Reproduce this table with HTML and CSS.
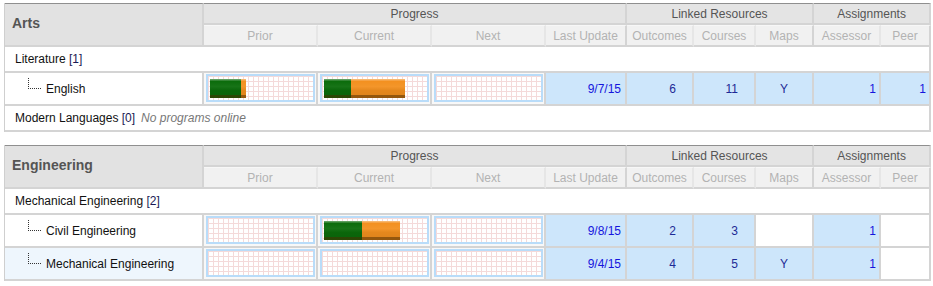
FILE: index.html
```html
<!DOCTYPE html>
<html lang="en">
<head>
<meta charset="utf-8">
<title>Program Status</title>
<link rel="stylesheet" href="styles.css">
</head>
<body>

<table class="grid">
  <colgroup>
    <col class="c-name"><col class="c-bar"><col class="c-bar"><col class="c-bar">
    <col class="c-date"><col class="c-out"><col class="c-crs"><col class="c-map">
    <col class="c-ass"><col class="c-peer">
  </colgroup>
  <thead>
    <tr class="hd1">
      <th rowspan="2" class="area">Arts</th>
      <th colspan="4">Progress</th>
      <th colspan="3">Linked Resources</th>
      <th colspan="2">Assignments</th>
    </tr>
    <tr class="hd2">
      <th class="minor">Prior</th><th class="minor">Current</th><th class="minor">Next</th><th>Last Update</th>
      <th class="minor">Outcomes</th><th class="minor">Courses</th><th>Maps</th>
      <th class="minor">Assessor</th><th>Peer</th>
    </tr>
  </thead>
  <tbody>
    <tr class="group"><td colspan="10">Literature <span class="count">[1]</span></td></tr>
    <tr class="program">
      <td class="name"><span class="branch"></span>English</td>
      <td class="bar-cell"><div class="track"><div class="bar"><span class="done" style="width:31px"></span><span class="work" style="width:5px"></span></div></div></td>
      <td class="bar-cell"><div class="track"><div class="bar"><span class="done" style="width:27px"></span><span class="work" style="width:54px"></span></div></div></td>
      <td class="bar-cell"><div class="track"></div></td>
      <td class="val date">9/7/15</td>
      <td class="val num">6</td>
      <td class="val num">11</td>
      <td class="val flag">Y</td>
      <td class="val asg">1</td>
      <td class="val asg">1</td>
    </tr>
    <tr class="group"><td colspan="10">Modern Languages <span class="count">[0]</span><span class="note">No programs online</span></td></tr>
  </tbody>
</table>

<table class="grid">
  <colgroup>
    <col class="c-name"><col class="c-bar"><col class="c-bar"><col class="c-bar">
    <col class="c-date"><col class="c-out"><col class="c-crs"><col class="c-map">
    <col class="c-ass"><col class="c-peer">
  </colgroup>
  <thead>
    <tr class="hd1">
      <th rowspan="2" class="area">Engineering</th>
      <th colspan="4">Progress</th>
      <th colspan="3">Linked Resources</th>
      <th colspan="2">Assignments</th>
    </tr>
    <tr class="hd2">
      <th class="minor">Prior</th><th class="minor">Current</th><th class="minor">Next</th><th>Last Update</th>
      <th class="minor">Outcomes</th><th class="minor">Courses</th><th>Maps</th>
      <th class="minor">Assessor</th><th>Peer</th>
    </tr>
  </thead>
  <tbody>
    <tr class="group"><td colspan="10">Mechanical Engineering <span class="count">[2]</span></td></tr>
    <tr class="program">
      <td class="name"><span class="branch"></span>Civil Engineering</td>
      <td class="bar-cell"><div class="track"></div></td>
      <td class="bar-cell"><div class="track"><div class="bar"><span class="done" style="width:38px"></span><span class="work" style="width:38px"></span></div></div></td>
      <td class="bar-cell"><div class="track"></div></td>
      <td class="val date">9/8/15</td>
      <td class="val num">2</td>
      <td class="val num">3</td>
      <td class="empty"></td>
      <td class="val asg">1</td>
      <td class="empty"></td>
    </tr>
    <tr class="program alt">
      <td class="name"><span class="branch"></span>Mechanical Engineering</td>
      <td class="bar-cell"><div class="track"></div></td>
      <td class="bar-cell"><div class="track"></div></td>
      <td class="bar-cell"><div class="track"></div></td>
      <td class="val date">9/4/15</td>
      <td class="val num">4</td>
      <td class="val num">5</td>
      <td class="val flag">Y</td>
      <td class="val asg">1</td>
      <td class="empty"></td>
    </tr>
  </tbody>
</table>

</body>
</html>
```

FILE: styles.css
```css
body {
  margin: 0;
  padding: 3px 2px 0 4px;
  background: #fff;
  color: #111;
  font-family: "Liberation Sans", Arial, sans-serif;
  font-size: 12px;
}

/* status table */
.grid {
  width: 927px;
  table-layout: fixed;
  border-collapse: separate;
  border-spacing: 0;
  border-left: 1px solid #cfcfcf;
  margin-bottom: 13px;
}

.c-name { width: 199px; }
.c-bar  { width: 114px; }
.c-date { width: 81px; }
.c-out  { width: 67px; }
.c-crs  { width: 62px; }
.c-map  { width: 58px; }
.c-ass  { width: 67px; }
.c-peer { width: 50px; }

.grid th,
.grid td {
  padding: 0;
  border-right: 2px solid #d4d4d4;
  border-bottom: 2px solid #d4d4d4;
  white-space: nowrap;
}

/* header rows */
.grid thead th {
  font-weight: normal;
  color: #555;
  text-align: center;
}

.grid .hd1 th {
  height: 19px;
  background: #e4e4e4;
  border-top: 1px solid #8f8f8f;
}

.grid .hd1 th.area {
  text-align: left;
  padding: 0 0 3px 7px;
  font-size: 14px;
  font-weight: bold;
  color: #555;
  background: #e2e2e2;
  vertical-align: middle;
}

.grid .hd2 th {
  height: 19px;
  background: #f1f1f1;
  color: #b3b3b3;
  border-top: 1px solid #f7f7f7;
}

.grid .hd2 th.minor {
  border-right: 2px solid #e6e6e6;
}

/* group rows */
.group td {
  height: 24px;
  padding-left: 10px;
  background: #fff;
}

.count {
  color: #1a1a55;
}

.note {
  margin-left: 6px;
  font-style: italic;
  color: #777;
}

/* program rows */
.grid .name {
  padding-left: 23px;
  background: #fff;
}

.grid .alt .name {
  background: #eef6fd;
}

/* dotted tree connector in front of a program name */
.branch {
  display: inline-block;
  width: 12px;
  height: 10px;
  margin: -6px 5px 0 0;
  border-left: 1px dotted #333;
  border-bottom: 1px dotted #333;
  vertical-align: 4px;
}

.grid .bar-cell {
  padding: 1px 1px 2px 2px;
  background: #f8f8f8;
}

.track {
  height: 24px;
  border: 2px solid #b9dcf9;
  background-color: #fff;
  background-image:
    linear-gradient(to right, #f4dada 1px, transparent 1px),
    linear-gradient(to bottom, #f4dada 1px, transparent 1px);
  background-size: 5px 5px;
}

.bar {
  display: flex;
  height: 19px;
  margin: 3px 0 0 2px;
}

.bar span {
  display: block;
  height: 100%;
  background-image: linear-gradient(to bottom,
    rgba(255, 255, 255, 0.35) 0, rgba(255, 255, 255, 0.35) 1px,
    rgba(255, 255, 255, 0) 2px,
    rgba(255, 255, 255, 0.05) 40%,
    rgba(0, 0, 0, 0.06) 60%,
    rgba(0, 0, 0, 0.08) 85%,
    rgba(70, 40, 0, 0.55) 85%,
    rgba(70, 40, 0, 0.55) 100%);
}

.bar .done { background-color: #0b6c0b; }
.bar .work { background-color: #f3901f; }

.val {
  background: #cde6fb;
  text-align: right;
}

.grid .date {
  padding-right: 4px;
  color: #1515dd;
}

.grid .num {
  padding-right: 16px;
  color: #1d2a96;
}

.flag {
  text-align: center;
  color: #1d2a96;
}

.grid .asg {
  padding-right: 3px;
  color: #1515dd;
}

.empty {
  background: #fff;
}
```
